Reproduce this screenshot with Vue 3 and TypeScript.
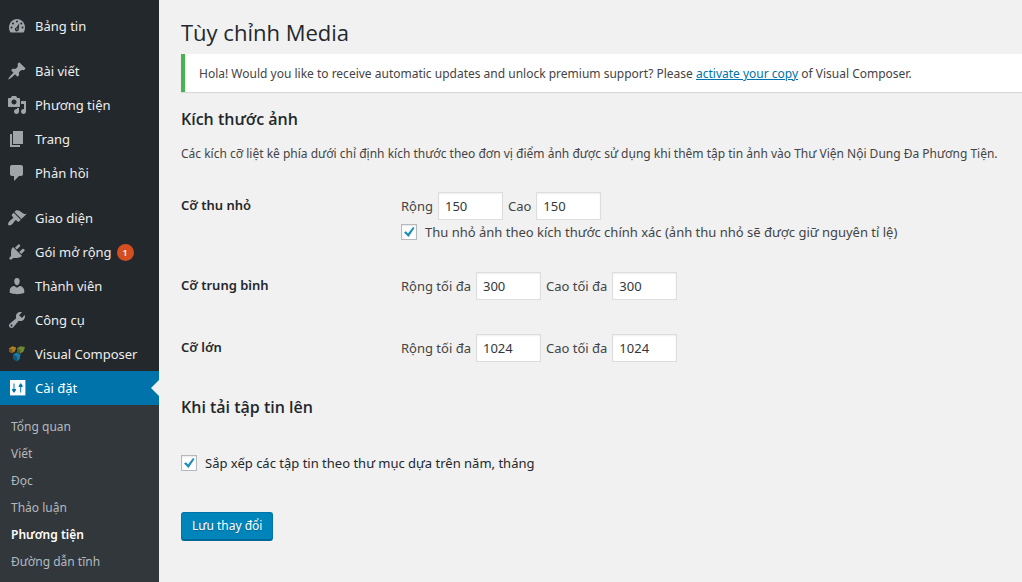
<script setup lang="ts">
import { ref } from 'vue'

interface MenuItem {
  label: string
  icon: string
  path?: string
  badge?: number
  current?: boolean
}

const menuGroups: MenuItem[][] = [
  [{ label: 'Bảng tin', icon: 'dashboard' }],
  [
    { label: 'Bài viết', icon: 'post', path: 'M10.44 3.02l1.82-1.82 6.36 6.35-1.83 1.82c-1.05-.68-2.48-.57-3.41.36l-.75.75c-.92.93-1.04 2.35-.35 3.41l-1.83 1.82-2.41-2.41-2.8 2.79c-.42.42-3.38 2.71-3.8 2.29s1.86-3.39 2.28-3.81l2.79-2.79L4.1 9.36l1.83-1.82c1.05.69 2.48.57 3.4-.36l.75-.75c.93-.92 1.05-2.35.36-3.41z' },
    { label: 'Phương tiện', icon: 'media', path: 'M13 11V4c0-.55-.45-1-1-1h-1.67L9 1H5L3.67 3H2c-.55 0-1 .45-1 1v7c0 .55.45 1 1 1h10c.55 0 1-.45 1-1zM7 4.5c1.38 0 2.5 1.12 2.5 2.5S8.38 9.5 7 9.5 4.5 8.38 4.5 7 5.62 4.5 7 4.5zM14 6h5v10.5c0 1.38-1.12 2.5-2.5 2.5S14 17.88 14 16.5s1.12-2.5 2.5-2.5c.17 0 .34.02.5.05V9h-3V6zm-4 8.05V13h2v3.5c0 1.38-1.12 2.5-2.5 2.5S7 17.88 7 16.5 8.12 14 9.5 14c.17 0 .34.02.5.05z' },
    { label: 'Trang', icon: 'page', path: 'M6 15V2h10v13H6zm-1 1h8v2H3V5h2v11z' },
    { label: 'Phản hồi', icon: 'comments', path: 'M5 2h9c1.1 0 2 .9 2 2v7c0 1.1-.9 2-2 2h-2l-5 5v-5H5c-1.1 0-2-.9-2-2V4c0-1.1.9-2 2-2z' },
  ],
  [
    { label: 'Giao diện', icon: 'appearance', path: 'M14.48 11.06L7.41 3.99l1.5-1.5c.5-.56 2.3-.47 3.51.32 1.21.8 1.43 1.28 2.91 2.1 1.18.64 2.45 1.26 4.45.85zm-.71.71L6.7 4.7 4.93 6.47c-.39.39-.39 1.02 0 1.41l1.06 1.06c.39.39.39 1.03 0 1.42-.6.6-1.43 1.11-2.21 1.69-.35.26-.7.53-1.01.84C1.43 14.23.4 16.08 1.4 17.07c.99 1 2.84-.03 4.18-1.36.31-.31.58-.66.85-1.02.57-.78 1.08-1.61 1.69-2.21.39-.39 1.02-.39 1.41 0l1.06 1.06c.39.39 1.02.39 1.41 0z' },
    { label: 'Gói mở rộng', icon: 'plugins', badge: 1, path: 'M13.11 4.36L9.87 7.6 8 5.73l3.24-3.24c.35-.34 1.05-.2 1.56.32.52.51.66 1.21.31 1.55zm-8 1.77l.91-1.12 9.01 9.01-1.19.84c-.71.71-2.63 1.16-3.82 1.16H6.14L4.9 17.26c-.59.59-1.54.59-2.12 0-.59-.58-.59-1.53 0-2.12l1.24-1.24v-3.88c0-1.13.4-3.19 1.09-3.89zm7.26 3.97l3.24-3.24c.34-.35 1.04-.21 1.55.31.52.51.66 1.21.31 1.55l-3.24 3.25z' },
    { label: 'Thành viên', icon: 'users', path: 'M10 9.25c-2.27 0-2.73-3.44-2.73-3.44C7 4.02 7.82 2 9.97 2c2.16 0 2.98 2.02 2.71 3.81 0 0-.41 3.44-2.68 3.44zm0 2.57L12.72 10c2.39 0 4.52 2.33 4.52 4.53v2.49s-3.65 1.13-7.24 1.13c-3.65 0-7.24-1.13-7.24-1.13v-2.49c0-2.25 1.94-4.48 4.47-4.48z' },
    { label: 'Công cụ', icon: 'tools', path: 'M16.68 9.77c-1.34 1.34-3.3 1.67-4.95.99l-5.41 6.52c-.99.99-2.59.99-3.58 0s-.99-2.59 0-3.57l6.52-5.42c-.68-1.65-.35-3.61.99-4.95 1.28-1.28 3.12-1.62 4.72-1.06l-2.89 2.89 2.82 2.82 2.86-2.87c.53 1.58.18 3.39-1.08 4.65zM3.81 16.21c.4.39 1.04.39 1.43 0 .4-.4.4-1.04 0-1.43-.39-.4-1.03-.4-1.43 0-.39.39-.39 1.03 0 1.43z' },
    { label: 'Visual Composer', icon: 'composer' },
    { label: 'Cài đặt', icon: 'settings', current: true },
  ],
]

const submenu = ['Tổng quan', 'Viết', 'Đọc', 'Thảo luận', 'Phương tiện', 'Đường dẫn tĩnh']
const currentSub = 'Phương tiện'

const sizes = ref([
  { id: 'thumbnail', title: 'Cỡ thu nhỏ', widthLabel: 'Rộng', heightLabel: 'Cao', width: 150, height: 150 },
  { id: 'medium', title: 'Cỡ trung bình', widthLabel: 'Rộng tối đa', heightLabel: 'Cao tối đa', width: 300, height: 300 },
  { id: 'large', title: 'Cỡ lớn', widthLabel: 'Rộng tối đa', heightLabel: 'Cao tối đa', width: 1024, height: 1024 },
])
const crop = ref(true)
const organize = ref(true)
</script>

<template>
  <div class="admin">
    <nav class="sidebar">
      <ul v-for="(group, g) in menuGroups" :key="g" class="group">
        <li v-for="item in group" :key="item.label">
          <a href="#" class="item" :class="{ current: item.current }">
            <svg class="icon" viewBox="0 0 20 20" aria-hidden="true">
              <path v-if="item.path" :d="item.path" fill-rule="evenodd" />
              <template v-else-if="item.icon === 'dashboard'">
                <path d="M3.600 16.400C2.600 15 2 13.300 2 11.400 2 6.800 5.600 3 10 3s8 3.800 8 8.400c0 1.900-.6 3.600-1.600 5z" />
                <g class="cut">
                  <circle cx="10" cy="5.500" r="1" />
                  <circle cx="6" cy="7.400" r="1" />
                  <circle cx="4.500" cy="11.500" r="1" />
                  <circle cx="15.500" cy="11.500" r="1" />
                  <circle cx="14.300" cy="7.400" r="1" />
                  <path d="M12.300 7.300l-.5 5.500a2 2 0 1 1-2.400-1.400z" />
                </g>
                <circle cx="9.900" cy="13" r=".7" />
              </template>
              <template v-else-if="item.icon === 'composer'">
                <path fill="#b07d22" d="M2 4.400L5.200 2.200 9.200 3.400 8 7.200 5.400 9 2 7.800z" />
                <path fill="#7c5a1c" d="M2 4.400l3.400 1.200V9L2 7.800z" />
                <path fill="#6c8a35" d="M10 4.400l3.200-2.200 4.800.8-1.500 4.400L13.400 9.400 10 8z" />
                <path fill="#4c652b" d="M10 4.400l3.400 1.400v3.600L10 8z" />
                <path fill="#1a7ba6" d="M6 10.600l3.700-2.200 3.800 2.200-.8 4.400-3 2.600V13.200z" />
                <path fill="#125a7c" d="M6 10.600l3.700 2v5L6 15z" />
              </template>
              <template v-else>
                <path d="M3 2h15.400v15.400H3z" />
                <g class="cut">
                  <path d="M6.500 5.500h1V11H9v1l-1.500 2.500h-1L5 12v-1h1.500z" />
                  <path d="M13.200 14.500h1V9h1.500V8l-1.500-2.500h-1L11.700 8v1h1.500z" />
                </g>
              </template>
            </svg>
            <span>{{ item.label }}</span>
            <span v-if="item.badge" class="badge">{{ item.badge }}</span>
          </a>
        </li>
      </ul>
      <ul class="submenu">
        <li v-for="entry in submenu" :key="entry">
          <a href="#" :class="{ active: entry === currentSub }">{{ entry }}</a>
        </li>
      </ul>
    </nav>

    <main class="content">
      <h1>Tùy chỉnh Media</h1>
      <div class="notice">
        Hola! Would you like to receive automatic updates and unlock premium support? Please
        <a href="#">activate your copy</a> of Visual Composer.
      </div>
      <form @submit.prevent>
        <h2>Kích thước ảnh</h2>
        <p class="description">Các kích cỡ liệt kê phía dưới chỉ định kích thước theo đơn vị điểm ảnh được sử dụng khi thêm tập tin ảnh vào Thư Viện Nội Dung Đa Phương Tiện.</p>

        <div class="sizes">
          <div v-for="size in sizes" :key="size.id" class="row" role="group" :aria-labelledby="size.id">
            <h3 :id="size.id">{{ size.title }}</h3>
            <div class="fields">
              <div class="pair">
                <label :for="size.id + '-w'">{{ size.widthLabel }}</label>
                <input :id="size.id + '-w'" v-model="size.width" type="number" min="0">
                <label :for="size.id + '-h'">{{ size.heightLabel }}</label>
                <input :id="size.id + '-h'" v-model="size.height" type="number" min="0">
              </div>
              <label v-if="size.id === 'thumbnail'" class="check">
                <span class="box">
                  <input v-model="crop" type="checkbox">
                  <svg viewBox="0 0 16 16" aria-hidden="true"><path d="M3 8.500l2-1.300 2 2.300L12 3l1.500 1L7.500 13z" /></svg>
                </span>
                Thu nhỏ ảnh theo kích thước chính xác (ảnh thu nhỏ sẽ được giữ nguyên tỉ lệ)
              </label>
            </div>
          </div>
        </div>

        <h2>Khi tải tập tin lên</h2>
        <label class="check upload">
          <span class="box">
            <input v-model="organize" type="checkbox">
            <svg viewBox="0 0 16 16" aria-hidden="true"><path d="M3 8.500l2-1.300 2 2.300L12 3l1.500 1L7.500 13z" /></svg>
          </span>
          Sắp xếp các tập tin theo thư mục dựa trên năm, tháng
        </label>
        <button type="submit">Lưu thay đổi</button>
      </form>
    </main>
  </div>
</template>

<style>
body {
  margin: 0;
  background: #f1f1f1;
}
</style>

<style scoped>
.admin {
  display: flex;
  min-height: 100vh;
  font-family: "Noto Sans", "Open Sans", sans-serif;
  font-size: 13px;
  line-height: 20px;
  color: #444;
}
.sidebar {
  display: flex;
  flex-direction: column;
  flex: 0 0 159px;
  box-sizing: border-box;
  padding-top: 9px;
  background: #23282d;
}
ul {
  list-style: none;
  margin: 0;
  padding: 0;
}
.group + .group {
  margin-top: 11px;
}
.item {
  display: flex;
  align-items: center;
  position: relative;
  height: 34px;
  padding-left: 7px;
  color: #eee;
  font-size: 13px;
  text-decoration: none;
  white-space: nowrap;
}
.icon {
  width: 20px;
  height: 20px;
  margin-right: 8px;
  fill: #a0a5aa;
}
.cut {
  fill: #23282d;
}
.current {
  background: #0073aa;
  color: #fff;
}
.current .icon {
  fill: #fff;
}
.current .cut {
  fill: #0073aa;
}
.current::after {
  content: "";
  position: absolute;
  right: 0;
  top: 9px;
  border: 8px solid transparent;
  border-left: 0;
  border-right-color: #f1f1f1;
}
.badge {
  width: 17px;
  height: 17px;
  margin-left: 5px;
  border-radius: 50%;
  background: #d54e21;
  color: #fff;
  font-size: 9px;
  font-weight: 600;
  line-height: 17px;
  text-align: center;
}
.submenu {
  flex: 1;
  padding: 8px 0 7px;
  background: #32373c;
}
.submenu a {
  display: block;
  padding-left: 11px;
  color: #b4b9be;
  font-size: 12px;
  line-height: 27px;
  text-decoration: none;
}
.submenu .active {
  color: #fff;
  font-weight: 600;
}
.content {
  flex: 1;
  min-width: 0;
  padding: 16px 0 32px 22px;
}
h1 {
  margin: 0 0 6px;
  color: #23282d;
  font-family: "Open Sans", sans-serif;
  font-size: 22px;
  font-weight: 400;
  line-height: 32px;
}
.notice {
  padding: 10px 14px 8px;
  border-left: 4px solid #46b450;
  background: #fff;
  box-shadow: 0 1px 1px rgba(0, 0, 0, 0.1);
  font-size: 12px;
}
.notice a {
  color: #0073aa;
}
h2 {
  margin: 17px 0 15px;
  color: #23282d;
  font-family: "Open Sans", sans-serif;
  font-size: 16px;
  font-weight: 600;
  line-height: 20px;
}
.description {
  margin: 0;
  font-size: 12px;
}
.sizes {
  display: grid;
  gap: 32px;
  margin: 28px 0 33px;
}
.row {
  display: grid;
  grid-template-columns: 220px 1fr;
  min-height: 30px;
}
h3 {
  margin: 3px 0;
  color: #23282d;
  font-size: 13px;
  font-weight: 600;
  line-height: 20px;
}
.pair {
  display: flex;
  align-items: center;
  gap: 5px;
}
.pair input {
  box-sizing: border-box;
  width: 65px;
  height: 28px;
  margin: 0;
  padding: 3px 6px;
  border: 1px solid #ddd;
  background: #fff;
  box-shadow: inset 0 1px 2px rgba(0, 0, 0, 0.07);
  color: #32373c;
  font: inherit;
  appearance: textfield;
}
.check {
  display: flex;
  align-items: center;
  gap: 8px;
  margin-top: 4px;
  line-height: 16px;
}
.box {
  display: grid;
  width: 16px;
  height: 16px;
}
.box input,
.box svg {
  grid-area: 1 / 1;
  width: 16px;
  height: 16px;
  margin: 0;
}
.box input {
  box-sizing: border-box;
  border: 1px solid #b4b9be;
  background: #fff;
  box-shadow: inset 0 1px 2px rgba(0, 0, 0, 0.1);
  appearance: none;
}
.box svg {
  fill: #1e8cbe;
  pointer-events: none;
  visibility: hidden;
}
.box input:checked + svg {
  visibility: visible;
}
.upload {
  margin: 38px 0 41px;
  color: #23282d;
}
button {
  height: 29px;
  padding: 0 10px;
  border: 1px solid #0073aa;
  border-bottom: 2px solid #006799;
  border-radius: 3px;
  background: #0085ba;
  color: #fff;
  font: inherit;
  font-size: 12px;
  text-shadow: 0 1px 1px #006799;
}
</style>
